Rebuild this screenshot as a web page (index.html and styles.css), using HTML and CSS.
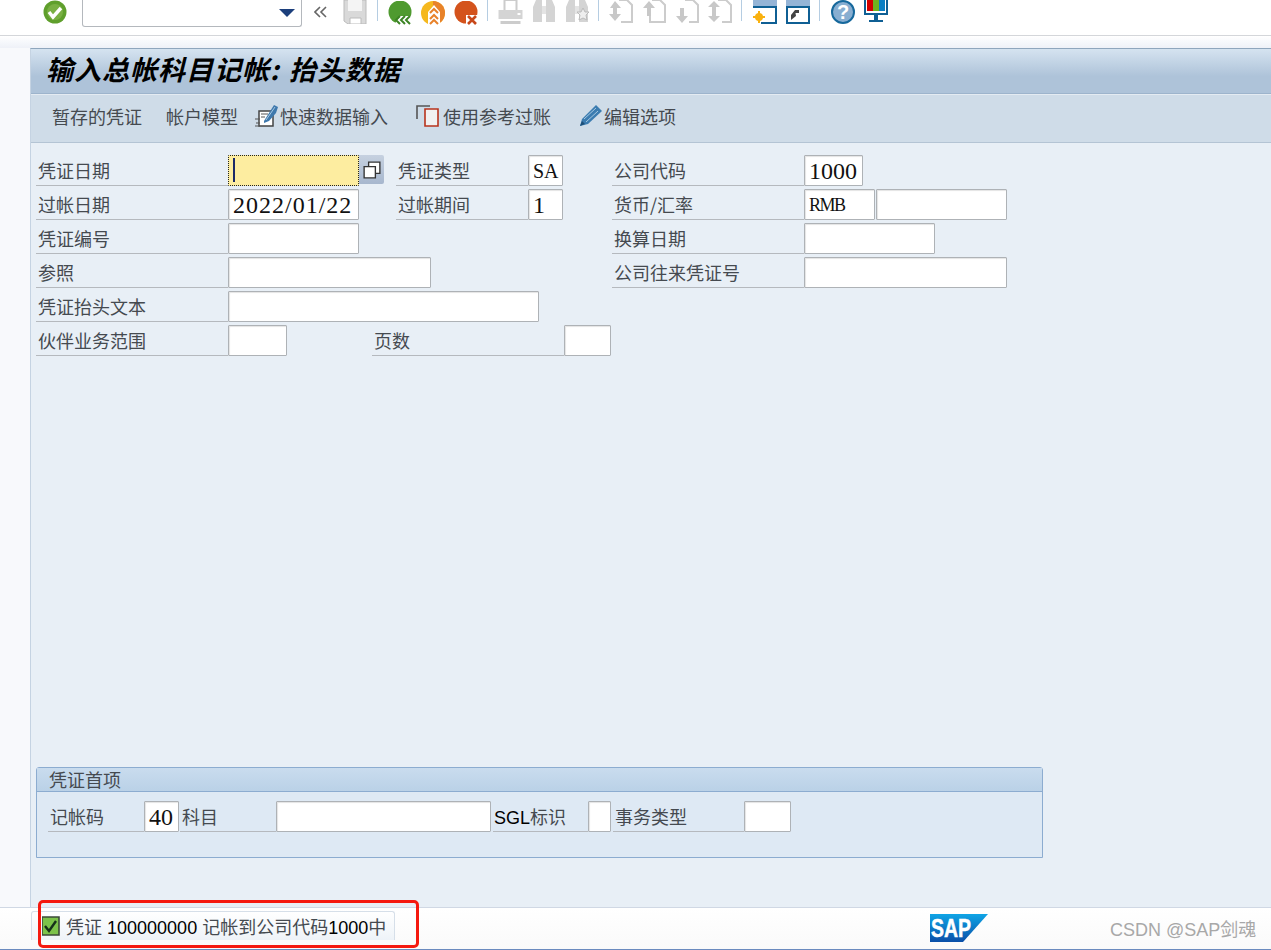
FILE: index.html
```html
<!DOCTYPE html>
<html lang="zh-CN">
    <head>
        <title>输入总帐科目记帐: 抬头数据</title>
        <meta charset="utf-8" />
        <link rel="stylesheet" href="styles.css">
    </head>
    <body>
        <div id="systembar">
            <svg class="ico first" viewBox="0 0 24 24"><circle cx="12" cy="12" r="11.5" fill="#5f9f2c"/><circle cx="12" cy="12" r="8" fill="#79b043"/><path d="M6 12l4 5 8-9" fill="none" stroke="#fff" stroke-width="3.4"/></svg>
            <div id="command"><svg viewBox="0 0 16 8" width="16" height="8"><path d="M0 0h16l-8 8z" fill="#1c3f7c"/></svg></div>
            <svg class="chev" viewBox="0 0 14 12"><path d="M6 1L1 6l5 5M12 1L7 6l5 5" fill="none" stroke="#666" stroke-width="1.6"/></svg>
            <svg class="ico save" viewBox="0 0 24 24"><path d="M1 0h22v24H5l-4-3z" fill="#d9d9d9" stroke="#bbb"/><path d="M5 0h14v11H5z" fill="#f4f4f4"/><path d="M7 18h11v6H7z" fill="#fff" stroke="#bbb"/></svg>
            <i class="sep s1"></i>
            <svg class="ico act" viewBox="0 0 24 24"><circle cx="12" cy="11" r="11.5" fill="#4f9a2f"/><path d="M6 24l6-9h12v9z" fill="#fff"/><path d="M12 15l-4 4 4 4M17 15l-4 4 4 4M22 15l-4 4 4 4" fill="none" stroke="#3c8424" stroke-width="2"/></svg>
            <svg class="ico act" viewBox="0 0 24 24"><circle cx="12" cy="12" r="12" fill="#f5b81e"/><path d="M12 0a12 12 0 0 1 0 24z" fill="#e8822a"/><path d="M7 24V11l6-7 6 7v13z" fill="#fff"/><path d="M9 12l4-4 4 4M9 18l4-4 4 4M9 23l4-4 4 4" fill="none" stroke="#e8822a" stroke-width="2"/></svg>
            <svg class="ico act" viewBox="0 0 24 24"><circle cx="12" cy="11" r="11.5" fill="#d4531c"/><path d="M12 24V14h12v10z" fill="#fff"/><path d="M14 15l8 8m0-8l-8 8" stroke="#c8481a" stroke-width="2.6"/></svg>
            <i class="sep s2"></i>
            <svg class="ico off print" viewBox="0 0 24 24"><path d="M6 0h12v12H6z" fill="#fff" stroke="#ccc" stroke-width="2"/><path d="M0 10h24v9H0z" fill="#d4d4d4"/><path d="M2 21h20v3H2z" fill="#ccc"/><path d="M19 13h3v2h-3z" fill="#fff"/></svg>
            <svg class="ico off" viewBox="0 0 24 24"><path d="M1 22V7l3-7h6v22zM14 22V0h6l3 7v15z" fill="#d4d4d4"/><path d="M10 6h4v8h-4z" fill="#e4e4e4"/></svg>
            <svg class="ico off" viewBox="0 0 24 24"><path d="M1 22V7l3-7h6v22zM14 22V0h6l3 7v15z" fill="#d4d4d4"/><path d="M10 6h4v8h-4z" fill="#e4e4e4"/><path d="M18 8l2 4h4l-3 3 1 5-4-2-4 2 1-5-3-3h4z" fill="#eee" stroke="#bbb"/></svg>
            <i class="sep s3"></i>
            <svg class="ico off" viewBox="0 0 24 24"><path d="M10 0h8l5 5v17H12" fill="none" stroke="#ccc" stroke-width="2"/><path d="M6 1l6 7H1zM6 21l6-7H0zM4 8h4v6H4z" fill="#c8c8c8"/></svg>
            <svg class="ico off" viewBox="0 0 24 24"><path d="M10 0h8l5 5v17H8v-8" fill="none" stroke="#ccc" stroke-width="2"/><path d="M7 1l6 7H9v8H5V8H1z" fill="#c8c8c8"/></svg>
            <svg class="ico off" viewBox="0 0 24 24"><path d="M10 0h8l5 5v17H14" fill="none" stroke="#ccc" stroke-width="2"/><path d="M5 8h4v8h4l-6 7-6-7h4z" fill="#c8c8c8"/></svg>
            <svg class="ico off" viewBox="0 0 24 24"><path d="M10 0h8l5 5v17H14" fill="none" stroke="#ccc" stroke-width="2"/><path d="M6 1l6 6H0zM6 22l6-6H0zM4 7h4v9H4z" fill="#c8c8c8"/></svg>
            <i class="sep s4"></i>
            <svg class="ico" viewBox="0 0 24 24"><path d="M0 0h24v7H0z" fill="#95b4d6"/><path d="M1 7h22v16H1z" fill="#fff"/><path d="M0 7h24M23 7v16M8 23h16" fill="none" stroke="#0f5f94" stroke-width="2"/><circle cx="6" cy="17" r="4" fill="#f9b10f"/><path d="M6 11v12M0 17h12" stroke="#f9b10f" stroke-width="2"/></svg>
            <svg class="ico" viewBox="0 0 24 24"><path d="M0 0h24v7H0z" fill="#95b4d6"/><path d="M1 7h22v16H1z" fill="#fff" stroke="#0f5f94" stroke-width="2"/><path d="M5 20v-5l4-5 1 6zM9 10h4v3H9z" fill="#444"/></svg>
            <i class="sep s5"></i>
            <svg class="ico" viewBox="0 0 24 24"><circle cx="12" cy="12" r="11" fill="#88aed1" stroke="#16689c" stroke-width="2"/><text x="12" y="19" class="qmark">?</text></svg>
            <svg class="ico act2" viewBox="0 0 24 24"><path d="M1 0h22v15H1z" fill="#fff" stroke="#0f5f94" stroke-width="2"/><path d="M3 0h6v12H3z" fill="#d10000"/><path d="M9 0h6v12H9z" fill="#6fb31f"/><path d="M15 0h6v12h-6z" fill="#0a7fc4"/><path d="M10 16h4v5h-4zM5 21h14v2H5z" fill="#0f5f94"/></svg>
        </div>
        <div id="strip"></div>
        <div id="panel">
            <h1 id="title">输入总帐科目记帐: 抬头数据</h1>
            <div id="apptools">
                <span class="tool first">暂存的凭证</span>
                <span class="tool second">帐户模型</span>
                <svg class="toolicon quick" viewBox="0 0 24 24"><path d="M4 7h14v15H4z" fill="#fff" stroke="#444" stroke-width="1.5"/><path d="M0 15h5M1 19h4M0 22h5M6 10h7M6 13h4" stroke="#555" fill="none"/><path d="M9 17L19 1l4 2-2 6-7 8-5 2z" fill="#3f79ad"/><path d="M11 16L20 3" stroke="#a6c8e2"/></svg>
                <span class="tool">快速数据输入</span>
                <svg class="toolicon copy" viewBox="0 0 24 24"><path d="M1 15V2h13" fill="none" stroke="#555" stroke-width="1.6"/><path d="M9 5h13v17H9z" fill="#f1f1f1" stroke="#b8331c" stroke-width="1.6"/></svg>
                <span class="tool">使用参考过账</span>
                <svg class="toolicon pencil" viewBox="0 0 24 24"><path d="M1 22l2-7L17 1l6 6L9 20z" fill="#3b7cb0"/><path d="M5 15L17 4M7 18L19 7" stroke="#a6c8e2"/><path d="M1 22l2-5 3 3z" fill="#1d4f78"/></svg>
                <span class="tool">编辑选项</span>
            </div>

            <div id="form">
                <div class="row">
                    <label class="lbl">凭证日期</label>
                    <div class="cell">
                        <div class="inp focus w131"><i class="caret"></i></div>
                        <div class="f4"><svg viewBox="0 0 16 16" width="18" height="18"><path d="M5 1h10v10H5z" fill="#fff" stroke="#333" stroke-width="1.2"/><path d="M1 5h10v10H1z" fill="#fff" stroke="#333" stroke-width="1.2"/></svg></div>
                    </div>
                    <label class="lbl">凭证类型</label>
                    <div class="cell"><div class="inp w35 letters">SA</div></div>
                    <label class="lbl c5">公司代码</label>
                    <div class="cell"><div class="inp w59">1000</div></div>
                </div>
                <div class="row">
                    <label class="lbl">过帐日期</label>
                    <div class="cell"><div class="inp w131 date">2022/01/22</div></div>
                    <label class="lbl">过帐期间</label>
                    <div class="cell"><div class="inp w35">1</div></div>
                    <label class="lbl c5">货币/汇率</label>
                    <div class="cell">
                        <div class="inp w71 small">RMB</div>
                        <div class="inp w131"></div>
                    </div>
                </div>
                <div class="row">
                    <label class="lbl">凭证编号</label>
                    <div class="cell"><div class="inp w131"></div></div>
                    <label class="lbl c5">换算日期</label>
                    <div class="cell"><div class="inp w131"></div></div>
                </div>
                <div class="row">
                    <label class="lbl">参照</label>
                    <div class="cell"><div class="inp w203"></div></div>
                    <label class="lbl c5">公司往来凭证号</label>
                    <div class="cell"><div class="inp w203"></div></div>
                </div>
                <div class="row">
                    <label class="lbl">凭证抬头文本</label>
                    <div class="cell wide"><div class="inp w311"></div></div>
                </div>
                <div class="row last">
                    <label class="lbl">伙伴业务范围</label>
                    <div class="cell"><div class="inp w59"></div></div>
                    <label class="lbl pages">页数</label>
                    <div class="cell"><div class="inp w47"></div></div>
                </div>
            </div>

            <div id="group">
                <div id="grouphead">凭证首项</div>
                <div id="groupbody">
                    <label class="lbl g1">记帐码</label>
                    <div class="inp w35">40</div>
                    <label class="lbl g2">科目</label>
                    <div class="inp w215"></div>
                    <label class="lbl g3"><span class="latin">SGL</span>标识</label>
                    <div class="inp w23"></div>
                    <label class="lbl g4">事务类型</label>
                    <div class="inp w47"></div>
                </div>
            </div>
        </div>
        <div id="status">
            <div id="message">
                <svg class="okbox" viewBox="0 0 18 20"><path d="M0 1h17v18H0z" fill="#7cc24a" stroke="#3b4a3a" stroke-width="1.6"/><path d="M3 10l4 5 7-10" fill="none" stroke="#16301a" stroke-width="2.4"/></svg>
                <span>凭证 <b>100000000</b> 记帐到公司代码<b>1000</b>中</span>
            </div>
            <svg id="saplogo" viewBox="0 0 58 28"><defs><linearGradient id="sapblue" x1="0" y1="0" x2="0" y2="1"><stop offset="0" stop-color="#0fa5e6"/><stop offset="1" stop-color="#0b4fa8"/></linearGradient></defs><path d="M0 0h58L33 28H0z" fill="url(#sapblue)"/><text x="1" y="23" class="saptext" textLength="40" lengthAdjust="spacingAndGlyphs">SAP</text></svg>
            <span id="mark">CSDN @SAP剑魂</span>
            <div id="redbox"></div>
        </div>
    </body>
</html>
```

FILE: styles.css
```css
html, body {
    margin: 0px;
    padding: 0px;
    height: 950px;
    overflow: hidden;
    background: #f8f9fc;
    font-family: "Noto Sans CJK SC", sans-serif;
    font-size: 18px;
    color: #454a50;
}
body {
    display: flex;
    flex-direction: column;
}
h1 {
    margin: 0px;
}

/* system toolbar, its top is cut off in the shot */
#systembar {
    display: flex;
    align-items: flex-start;
    flex: none;
    height: 35px;
    overflow: hidden;
    border-bottom: 1px solid #d4d6da;
    background: #fff;
}
.ico {
    flex: none;
    width: 24px;
    height: 24px;
    margin-left: 9px;
}
.ico.first {
    margin-left: 43px;
}
.ico.save {
    margin-left: 15px;
}
.ico.act {
    margin-top: 1px;
}
.ico.print {
    width: 25px;
}
.ico.act2 {
    margin-top: -1px;
}
#command {
    display: flex;
    align-items: center;
    justify-content: flex-end;
    box-sizing: border-box;
    flex: none;
    width: 220px;
    height: 27px;
    margin-left: 15px;
    padding: 0px 6px 0px 0px;
    border: 1px solid #b4b8bd;
    border-top: none;
    border-radius: 0px 0px 3px 3px;
}
.chev {
    flex: none;
    width: 14px;
    height: 12px;
    margin: 6px 0px 0px 12px;
}
.sep {
    flex: none;
    width: 1px;
    height: 21px;
    background: #b5cde2;
}
.s1 {
    margin-left: 10px;
}
.s2 {
    margin-left: 9px;
    margin-right: 1px;
}
.s3 {
    margin-left: 9px;
    margin-right: 1px;
}
.s4, .s5 {
    margin-left: 9px;
    margin-right: 2px;
}
.s1 + .ico {
    margin-left: 10px;
}
.qmark {
    font-family: "Liberation Sans", sans-serif;
    font-size: 20px;
    font-weight: bold;
    fill: #fff;
    text-anchor: middle;
}

#strip {
    flex: none;
    height: 12px;
    background: linear-gradient(#fff, #eef1f8);
}

/* main panel */
#panel {
    display: flex;
    flex-direction: column;
    flex: 1;
    box-sizing: border-box;
    margin-left: 30px;
    min-height: 0px;
    border-left: 1px solid #c5d3e2;
    border-top: 1px solid #8fa6bd;
    background: #e8eff6;
}
#title {
    flex: none;
    box-sizing: border-box;
    height: 45px;
    padding-left: 15px;
    border-bottom: 1px solid #9db4cc;
    background: linear-gradient(#d5e3f0, #aec3d9 62%);
    color: #000;
    font-size: 27px;
    font-weight: bold;
    font-style: italic;
    letter-spacing: 1px;
    word-spacing: 2px;
    line-height: 40px;
}
#apptools {
    display: flex;
    align-items: center;
    flex: none;
    box-sizing: border-box;
    height: 49px;
    padding-bottom: 6px;
    border-top: 1px solid #e4ebf2;
    border-bottom: 1px solid #b4c4d4;
    background: #cfdce8;
}
.tool {
    white-space: nowrap;
}
.tool.first {
    margin-left: 21px;
}
.tool.second {
    margin-left: 24px;
}
.toolicon {
    flex: none;
    width: 24px;
    height: 24px;
}
.quick {
    margin: 0px 1px 0px 17px;
}
.copy {
    margin: 0px 3px 0px 28px;
}
.pencil {
    margin: 0px 1px 0px 28px;
}

#form {
    flex: none;
    display: flex;
    flex-direction: column;
    gap: 3px;
    padding: 12px 0px 0px 5px;
}
.row {
    display: grid;
    grid-template-columns: 192px 168px 132px 84px 192px auto;
    height: 31px;
}
.row.last {
    grid-template-columns: 192px 144px 192px auto;
}
.lbl {
    box-sizing: border-box;
    height: 31px;
    padding-left: 2px;
    border-bottom: 1px solid #b5b9be;
    white-space: nowrap;
    line-height: 30px;
}
.c5 {
    grid-column-start: 5;
}
.cell {
    display: flex;
    gap: 1px;
}
.inp {
    flex: none;
    box-sizing: border-box;
    height: 31px;
    padding-left: 4px;
    border: 1px solid #aeb2b6;
    border-radius: 1px;
    background: #fff;
    box-shadow: inset 1px 1px 1px #e4e4e4;
    color: #111;
    font-family: "Liberation Serif", serif;
    font-size: 24px;
    line-height: 30px;
    white-space: nowrap;
}
.inp.date {
    letter-spacing: 1px;
}
.inp.letters {
    font-size: 20px;
}
.inp.small {
    font-size: 18px;
    letter-spacing: -1.5px;
}
.inp.focus {
    border: 1px dotted #222;
    background: #fdeda0;
    box-shadow: none;
}
.caret {
    display: block;
    width: 2px;
    height: 24px;
    margin: 2px 0px 0px 0px;
    background: #1c2a66;
}
.f4 {
    display: flex;
    align-items: center;
    justify-content: center;
    width: 25px;
    height: 29px;
    margin-left: -1px;
    border-radius: 0px 2px 2px 0px;
    background: linear-gradient(#c6d1e0, #a7b7ce);
}
.w23 { width: 23px; }
.w35 { width: 35px; }
.w47 { width: 47px; }
.w59 { width: 59px; }
.w71 { width: 71px; }
.w131 { width: 131px; }
.w203 { width: 203px; }
.w215 { width: 215px; }
.w311 { width: 311px; }
.cell.wide {
    grid-column: span 3;
}

/* group box at the bottom of the panel */
#group {
    flex: none;
    box-sizing: border-box;
    width: 1007px;
    height: 91px;
    margin: auto 0px 49px 5px;
    border: 1px solid #8cacd0;
    border-radius: 3px 3px 0px 0px;
}
#grouphead {
    box-sizing: border-box;
    height: 24px;
    padding-left: 12px;
    border-bottom: 1px solid #8cacd0;
    background: linear-gradient(#c9dcee, #bad1e7);
    line-height: 22px;
}
#groupbody {
    display: flex;
    align-items: flex-start;
    box-sizing: border-box;
    height: 65px;
    padding: 9px 0px 0px 11px;
    background: #dee9f4;
}
.g1 { width: 96px; }
.g2 { width: 96px; margin-left: 1px; }
.g3 { width: 95px; margin-left: 2px; padding-left: 1px; }
.g4 { width: 131px; margin-left: 2px; }
.latin {
    color: #000;
    font-family: "Liberation Sans", sans-serif;
}

/* status bar */
#status {
    position: relative;
    display: flex;
    align-items: flex-start;
    flex: none;
    box-sizing: border-box;
    height: 43px;
    border-top: 1px solid #d0d8e4;
    border-bottom: 1px solid #6b8bbf;
    background: linear-gradient(#fff, #fafafa);
}
#message {
    display: flex;
    align-items: center;
    box-sizing: border-box;
    width: 364px;
    height: 29px;
    margin: 3px 0px 0px 31px;
    padding-left: 10px;
    border: 1px solid #d6dfe9;
    border-bottom: none;
    border-radius: 3px 3px 0px 0px;
    background: linear-gradient(#fff, #eef3f8);
    white-space: nowrap;
    word-spacing: 1px;
}
.okbox {
    flex: none;
    width: 18px;
    height: 20px;
    margin-right: 6px;
}
#message b {
    color: #000;
    font-family: "Liberation Sans", sans-serif;
    font-weight: normal;
}
#saplogo {
    flex: none;
    width: 58px;
    height: 28px;
    margin: 6px 0px 0px 535px;
}
.saptext {
    font-family: "Liberation Sans", sans-serif;
    font-size: 25px;
    font-weight: bold;
    fill: #fff;
    stroke: #fff;
    stroke-width: 0.5;
}
#mark {
    margin: 10px 0px 0px 122px;
    color: #a8a8a8;
    font-size: 18px;
    line-height: 24px;
    font-family: "Liberation Sans", "Noto Sans CJK SC", sans-serif;
    white-space: nowrap;
}
/* red marker drawn on the shot */
#redbox {
    position: absolute;
    left: 38px;
    top: -8px;
    box-sizing: border-box;
    width: 381px;
    height: 48px;
    border: 3px solid #f5190f;
    border-radius: 5px;
}
```
